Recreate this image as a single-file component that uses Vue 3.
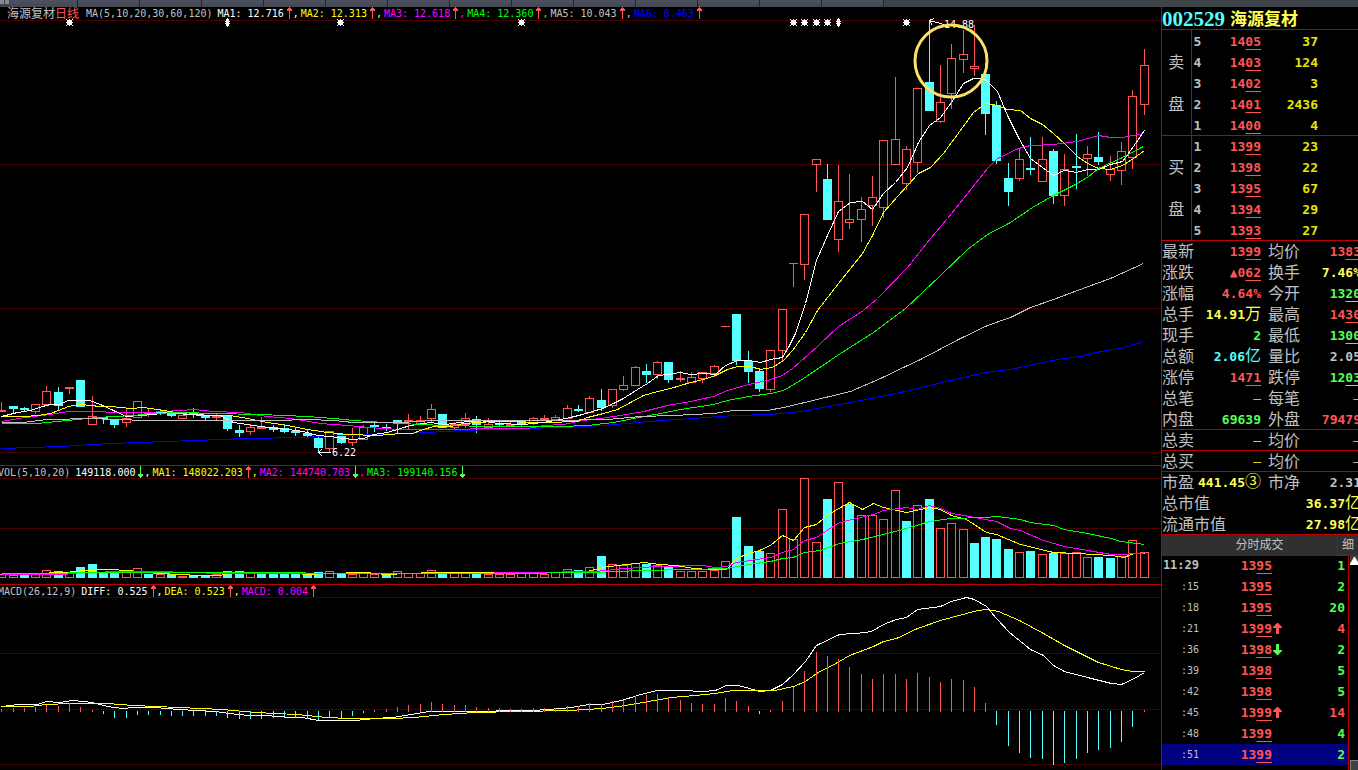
<script setup>
const tabs = Array.from({ length: 14 }, (_, i) => i)

const xAt = (i) => Math.floor(1.7 + 11.31 * i)

// [direction, high, body top, body bottom, low]
const candleRows = [
  [1,402,410,411,411],[0,406,406,409,413],[0,407,408,410,412],[1,404,404,411,414],[1,386,391,404,404],
  [0,387,392,406,410],[1,387,387,388,394],[0,380,380,407,407],[1,396,416,424,424],[0,417,417,419,424],
  [0,420,420,425,428],[1,409,418,422,427],[1,401,401,417,417],[1,408,413,414,417],[0,409,412,413,415],
  [0,411,412,416,417],[1,415,415,418,418],[0,408,412,415,418],[0,415,415,418,420],[1,414,416,417,420],
  [0,415,415,429,431],[0,425,430,433,437],[1,424,427,431,435],[1,417,427,428,429],[0,425,427,430,432],
  [0,424,428,432,433],[0,428,431,433,436],[0,430,433,436,438],[0,437,438,448,452],[1,431,431,448,452],
  [0,433,434,443,444],[1,428,439,442,446],[1,425,427,439,439],[0,421,425,427,432],[0,424,427,429,431],
  [0,420,420,422,433],[1,414,420,421,430],[1,416,420,423,423],[1,404,409,418,422],[0,414,414,428,428],
  [1,422,424,427,430],[1,413,418,424,428],[0,416,419,425,433],[1,418,424,427,429],[0,422,423,425,426],
  [1,422,424,425,426],[0,421,421,424,426],[1,417,418,423,425],[1,415,418,419,421],[1,415,417,419,419],
  [1,405,408,418,418],[0,405,409,411,412],[1,396,398,412,412],[0,389,400,408,411],[1,389,389,405,408],
  [1,376,385,389,391],[1,366,367,385,385],[0,364,371,375,383],[1,361,362,374,379],[0,362,362,380,383],
  [1,371,378,379,382],[1,372,377,382,382],[1,372,372,378,383],[1,365,366,373,377],[1,326,326,326,326],
  [0,314,314,361,365],[0,351,361,372,383],[0,368,371,389,392],[1,350,350,389,392],[1,309,309,350,362],
  [1,263,263,263,287],[1,214,214,264,280],[1,159,159,164,192],[0,164,179,220,220],[1,165,201,239,252],
  [1,174,219,222,229],[1,197,209,219,242],[1,176,197,205,226],[1,140,140,207,218],[1,77,139,164,164],
  [1,146,149,183,190],[1,88,88,162,173],[0,21,82,111,111],[1,65,102,121,123],[1,44,58,93,109],
  [1,30,54,59,73],[1,25,66,68,76],[0,63,74,114,135],[0,101,105,161,164],[0,163,178,192,206],
  [1,148,159,178,181],[0,137,168,170,175],[1,137,159,181,181],[0,149,151,196,204],[1,154,169,195,206],
  [0,134,166,168,189],[1,146,154,158,176],[0,132,157,162,165],[1,156,169,174,181],[1,142,151,170,185],
  [1,90,96,157,169],[1,49,65,104,115],
]
const candles = candleRows.map(([up, high, top, bottom, low], i) => ({
  up, high, top, bottom, low, x: xAt(i), thin: up && bottom - top < 2,
}))

// bar tops; negative marks a falling session
const volumeTops = [
  574,575,-574,574,570,-571,573,-567,-564,-572,-573,572,568,-574,574,-574,576,-575,-575,574,
  -571,-571,573,-573,-573,-573,-573,-574,-572,571,-573,574,573,574,-574,571,573,573,570,-573,
  573,573,-573,574,574,574,573,573,574,572,569,-570,567,-556,564,565,563,-564,565,-566,
  571,571,571,570,561,-517,-546,-551,553,509,539,478,542,-499,482,-504,515,515,519,490,
  -521,505,-499,528,523,529,-543,-537,-539,-549,552,-551,554,-553,553,552,557,-557,-558,556,540,552,
]
const volumes = volumeTops.map((v, i) => ({ up: v > 0, top: Math.abs(v), x: xAt(i) }))

const macdTips = [
  709,708,708,707,705,706,703,707,710,714,718,718,715,715,715,716,716,716,716,716,
  718,719,719,719,718,718,718,719,720,717,718,716,713,710,709,707,705,704,702,704,
  705,705,707,708,708,709,709,708,708,708,706,706,703,704,701,700,696,695,694,697,
  700,703,704,704,698,701,706,714,710,701,687,671,652,656,659,667,674,679,674,674,
  679,673,677,682,679,680,687,703,725,746,753,758,759,765,763,759,753,750,748,742,727,710,
]
const macdBars = macdTips.map((tip, i) => ({
  up: tip < 711, x: xAt(i), y: Math.min(tip, 711), h: tip < 711 ? 712 - tip : tip - 711,
}))

const priceLines = [
  { tone: 'blue', points: '1,448 60,446 110,443 167,441 247,438 300,437 340,435 400,433 447,431 460,430 527,428 587,426 627,423 660,420 693,418 733,415 770,414 800,411 850,402 900,392 950,380 985,372 1010,369 1057,359 1080,356 1100,351 1120,348 1143,341' },
  { tone: 'magenta', points: '1,421 25,417 50,414 68,411 97,411 113,412 147,412 180,410 193,409 213,411 240,412 267,416 290,418 320,423 347,425 367,427 400,429 447,429 493,428 527,428 543,425 563,424 582,420 600,418 620,415 643,411 667,405 690,401 713,396 727,390 748,384 767,380 782,375 792,368 800,361 817,346 838,326 863,310 877,298 907,267 930,238 947,218 967,193 987,168 997,158 1018,148 1030,145 1053,144 1077,141 1098,135 1110,137 1122,137 1143,133' },
  { tone: 'yellow', points: '1,416 25,416 37,415 50,413 58,410 68,406 80,404 100,406 110,406 130,408 143,407 163,410 182,413 200,415 230,415 247,418 267,422 287,425 307,429 327,432 347,434 377,435 400,433 412,433 423,429 433,426 450,426 463,423 493,421 547,422 577,421 587,417 603,413 617,409 630,402 643,395 657,391 670,388 690,382 703,379 715,375 727,369 737,366 750,366 760,369 772,367 783,360 792,350 800,339 805,332 817,310 838,283 862,253 872,235 883,212 897,196 918,173 930,167 943,153 973,112 985,103 997,105 1007,109 1020,110 1030,118 1042,124 1053,133 1065,144 1077,156 1087,163 1098,168 1110,169 1122,165 1133,158 1144,150' },
  { tone: 'white', points: '1,416 17,412 30,410 42,406 50,404 59,404 68,400 89,400 100,404 113,410 126,416 153,414 167,412 187,414 220,415 233,422 260,426 287,429 303,431 317,435 330,436 343,438 353,439 363,438 373,434 387,432 400,428 410,425 430,422 445,424 467,421 480,420 497,423 523,424 543,422 560,419 570,417 582,414 602,408 613,403 623,398 637,389 647,383 658,375 667,374 680,372 690,374 703,373 715,374 725,365 737,360 748,360 760,362 770,359 782,357 788,347 795,333 800,318 805,303 816,260 827,235 838,211 850,202 862,201 872,209 883,193 895,182 907,167 918,142 929,125 940,117 951,102 963,83 973,78 982,78 987,81 997,91 1007,115 1018,137 1030,158 1042,167 1053,175 1064,170 1076,172 1087,169 1098,169 1110,164 1122,161 1133,146 1144,130' },
  { tone: 'green', points: '1,423 37,423 67,420 97,417 133,415 150,413 183,412 213,413 260,414 307,416 333,418 353,420 400,423 443,425 493,426 560,426 587,425 613,422 633,418 660,413 680,409 713,404 727,400 748,396 770,393 783,390 800,380 840,353 873,332 905,308 940,275 967,249 987,234 1010,222 1032,207 1053,195 1075,184 1088,176 1098,168 1120,158 1143,146' },
  { tone: 'gray', points: '1,422 23,422 47,419 93,418 110,419 153,420 227,420 277,420 307,419 333,420 353,422 400,422 433,420 550,420 607,419 640,416 673,415 713,413 733,410 767,410 783,407 800,403 850,391 880,378 905,366 920,359 960,338 987,325 1010,317 1030,307 1053,299 1077,290 1110,278 1143,263' },
]
const volumeLines = [
  { tone: 'yellow', points: '1,574 65,572 85,570 107,569 129,570 144,572 178,574 200,575 218,575 237,572 296,573 307,574 326,573 366,572 385,574 433,572 481,572 533,573 560,572 587,571 602,567 617,565 644,562 659,564 675,565 694,568 709,569 726,569 736,558 748,553 759,550 770,545 782,535 793,540 804,527 816,524 828,514 849,502 862,509 873,503 883,507 906,512 929,507 940,509 951,515 966,519 986,532 996,534 1020,544 1053,552 1077,553 1111,555 1123,557 1134,553 1144,553' },
  { tone: 'magenta', points: '1,574 63,574 81,572 129,571 155,571 189,572 222,573 322,573 459,573 529,572 594,571 625,568 656,566 702,565 715,567 726,566 736,562 770,557 782,552 793,549 804,540 816,537 828,529 839,522 873,514 883,510 906,507 917,509 929,505 940,508 951,513 969,516 996,521 1010,528 1020,530 1043,540 1064,546 1087,550 1111,554 1144,553' },
  { tone: 'green', points: '1,573 60,573 76,572 300,572 310,573 520,573 574,572 594,572 640,570 690,569 726,568 748,564 770,561 782,558 793,557 804,552 820,550 839,543 862,539 883,534 906,528 929,521 950,518 985,517 996,516 1020,519 1030,522 1053,525 1064,529 1087,533 1111,538 1120,541 1144,544' },
]
const macdLines = [
  { tone: 'white', points: '1,706 18,704 37,704 46,701 59,702 72,700 92,702 107,706 122,708 133,707 155,707 178,709 215,711 229,713 248,715 266,715 289,717 302,717 318,720 355,720 374,718 392,717 411,714 429,711 459,711 533,710 560,708 571,707 589,704 602,704 621,700 637,695 656,690 682,690 702,691 715,690 726,685 738,685 749,688 759,691 770,690 782,684 793,674 805,661 816,645 839,634 866,632 873,630 883,624 896,619 906,617 917,609 940,606 951,601 966,597 974,599 986,606 996,618 1009,632 1030,649 1043,655 1053,665 1064,671 1087,677 1111,683 1121,684 1134,678 1144,672' },
  { tone: 'yellow', points: '1,706 30,706 46,704 70,703 107,703 133,705 178,707 222,709 255,712 296,714 326,717 348,718 392,718 414,717 444,714 474,712 518,711 568,710 602,708 625,705 648,701 671,697 694,695 715,693 732,690 774,690 793,686 805,681 816,673 839,661 849,655 873,646 883,641 896,638 917,628 940,620 951,617 966,613 977,610 986,609 998,611 1019,620 1043,633 1064,645 1098,662 1121,669 1132,671 1144,671' },
]

const priceLegend = [
  { text: 'MA1: 12.716', tone: 'white', dir: 'up' },
  { text: 'MA2: 12.313', tone: 'yellow', dir: 'up' },
  { text: 'MA3: 12.618', tone: 'magenta', dir: 'up' },
  { text: 'MA4: 12.360', tone: 'green', dir: 'up' },
  { text: 'MA5: 10.043', tone: 'gray', dir: 'up' },
  { text: 'MA6: 8.463', tone: 'blue', dir: 'up' },
]
const volumeLegend = [
  { text: '149118.000', tone: 'white', dir: 'down' },
  { text: 'MA1: 148022.203', tone: 'yellow', dir: 'up' },
  { text: 'MA2: 144740.703', tone: 'magenta', dir: 'down' },
  { text: 'MA3: 199140.156', tone: 'green', dir: 'down' },
]
const macdLegend = [
  { text: 'DIFF: 0.525', tone: 'white', dir: 'up' },
  { text: 'DEA: 0.523', tone: 'yellow', dir: 'up' },
  { text: 'MACD: 0.004', tone: 'magenta', dir: 'up' },
]

const stars = [69, 340, 521, 793, 804, 816, 827, 906]
const diamonds = [227, 838]

const book = [
  { name: '卖盘', rows: [['', 5, '14', '05', 37], ['卖', 4, '14', '03', 124], ['', 3, '14', '02', 3], ['盘', 2, '14', '01', 2436], ['', 1, '14', '00', 4]] },
  { name: '买盘', rows: [['', 1, '13', '99', 23], ['买', 2, '13', '98', 22], ['', 3, '13', '95', 67], ['盘', 4, '13', '94', 29], ['', 5, '13', '93', 27]] },
]

// [label, lead, underlined or unit part, tone, kind] for each half of the row
const stats = [
  { cells: [['最新', '13', '99', 'red', 'u'], ['均价', '13', '83', 'red', 'u']] },
  { cells: [['涨跌', '▲0', '62', 'red', 'u'], ['换手', '7.46%', '', 'lemon', '']] },
  { cells: [['涨幅', '4.64%', '', 'red', ''], ['今开', '13', '20', 'lime', 'u']] },
  { cells: [['总手', '14.91', '万', 'lemon', 'c'], ['最高', '14', '30', 'red', 'u']] },
  { cells: [['现手', '2', '', 'lime', ''], ['最低', '13', '00', 'lime', 'u']] },
  { cells: [['总额', '2.06', '亿', 'cyan', 'c'], ['量比', '2.05', '', 'gray', '']] },
  { cells: [['涨停', '14', '71', 'red', 'u'], ['跌停', '12', '03', 'lime', 'u']] },
  { cells: [['总笔', '', '–', 'gray', 'd'], ['每笔', '', '–', 'gray', 'd']] },
  { cells: [['内盘', '69639', '', 'lime', ''], ['外盘', '79479', '', 'red', '']] },
  { ruled: true, cells: [['总卖', '', '–', 'amber', 'd'], ['均价', '', '–', 'gray', 'd']] },
  { ruled: true, cells: [['总买', '', '–', 'amber', 'd'], ['均价', '', '–', 'gray', 'd']] },
  { ruled: true, cells: [['市盈', '441.45', '③', 'lemon', 'c'], ['市净', '2.31', '', 'gray', '']] },
  { cells: [['总市值', '36.37', '亿', 'lemon', 'c']] },
  { cells: [['流通市值', '27.98', '亿', 'lemon', 'c']] },
]
const partClass = { u: 'under', c: 'unit', d: 'dash' }

const ticks = [
  { time: '11:29', tail: '95', vol: 1, tone: 'lime' },
  { time: ':15', tail: '95', vol: 2, tone: 'lime' },
  { time: ':18', tail: '95', vol: 20, tone: 'lime' },
  { time: ':21', tail: '99', vol: 4, tone: 'red', dir: 'up' },
  { time: ':36', tail: '98', vol: 2, tone: 'lime', dir: 'down' },
  { time: ':39', tail: '98', vol: 5, tone: 'lime' },
  { time: ':42', tail: '98', vol: 5, tone: 'lime' },
  { time: ':45', tail: '99', vol: 14, tone: 'red', dir: 'up' },
  { time: ':48', tail: '99', vol: 4, tone: 'lime' },
  { time: ':51', tail: '99', vol: 2, tone: 'lime', active: true },
]
</script>

<template>
  <div class="app">
    <div class="topbar">
      <i class="knob"></i><i class="knob"></i>
      <span v-for="t in tabs" :key="t" class="tab" :class="{ first: t === 0 }"></span>
    </div>
    <div class="body">
      <main class="charts">
        <section class="panel">
          <div class="legend main-legend">
            <span class="title">海源复材</span><span class="title red">日线</span>
            <span class="params">MA(5,10,20,30,60,120)</span>
            <span v-for="(l, i) in priceLegend" :key="l.text" class="item" :class="l.tone">
              {{ l.text }}<svg class="arrow" viewBox="0 0 7 12" :class="l.dir"><path d="M3 0h1v1h1v1h1v2H4v8H3V4H1V2h1V1h1z" /></svg><span v-if="i < priceLegend.length - 1" class="comma">,</span>
            </span>
          </div>
          <svg class="plot" viewBox="0 20 1161 445" preserveAspectRatio="none" role="img" aria-label="日线">
            <path class="grid" d="M0 20.5H1161M0 164.5H1161M0 308.5H1161M0 452.5H1161" />
            <g v-for="c in candles" :key="c.x" :class="c.up ? 'rise' : 'fall'">
              <rect v-if="c.high < c.top" :x="c.x" :y="c.high" width="1" :height="c.top - c.high" />
              <rect v-if="c.low > c.bottom" :x="c.x" :y="c.bottom" width="1" :height="c.low - c.bottom" />
              <rect v-if="!c.up || c.thin" :x="c.x - 4" :y="c.top" width="9" :height="c.up ? c.bottom - c.top + 1 : c.bottom - c.top" />
              <rect v-else class="hollow" :x="c.x - 3.5" :y="c.top + 0.5" width="8" :height="c.bottom - c.top" />
            </g>
            <polyline v-for="l in priceLines" :key="l.tone" class="line" :class="l.tone" :points="l.points" transform="translate(0.5 0.5)" />
            <path v-for="x in stars" :key="x" class="mark" :transform="`translate(${x} 22)`" d="M-2-2h5v5h-5zM-3-3h1v1h-1zM3-3h1v1h-1zM-3 3h1v1h-1zM3 3h1v1h-1zM0-3h1v7h-1zM-3 0h7v1h-7z" />
            <path v-for="x in diamonds" :key="x" class="mark" :transform="`translate(${x} 22)`" d="M0-4h1v1h1v2h1v1h-1v1h1v1h-1v2h-1v1h-1v-1h-1v-2h-1v-1h1v-1h-1v-1h1v-2h1z" />
            <path class="pointer" d="M929.5 20.5L944 24.5M929.5 20.5L934 18.5M929.5 20.5L932 25M318.5 452.5H331M318.5 452.5L322 449M318.5 452.5L322 456" />
            <text class="note" x="944" y="28">14.88</text>
            <text class="note" x="332" y="456">6.22</text>
            <circle class="ring" cx="951" cy="61" r="36" />
          </svg>
        </section>

        <section class="panel ruled">
          <div class="legend">
            <span class="params clipped">VOL(5,10,20)</span>
            <span v-for="(l, i) in volumeLegend" :key="l.text" class="item" :class="l.tone">
              {{ l.text }}<svg class="arrow" viewBox="0 0 7 12" :class="l.dir"><path d="M3 0h1v1h1v1h1v2H4v8H3V4H1V2h1V1h1z" /></svg><span v-if="i < volumeLegend.length - 1" class="comma">,</span>
            </span>
          </div>
          <svg class="plot" viewBox="0 478 1161 106" preserveAspectRatio="none" role="img" aria-label="VOL">
            <path class="grid" d="M0 478.5H1161M0 528.5H1161M0 577.5H1161" />
            <g v-for="v in volumes" :key="v.x" :class="v.up ? 'rise' : 'fall'">
              <rect v-if="v.up" class="hollow" :x="v.x - 3.5" :y="v.top + 0.5" width="8" :height="577 - v.top" />
              <rect v-else :x="v.x - 4" :y="v.top" width="9" :height="578 - v.top" />
            </g>
            <polyline v-for="l in volumeLines" :key="l.tone" class="line" :class="l.tone" :points="l.points" transform="translate(0.5 0.5)" />
          </svg>
        </section>

        <section class="panel ruled">
          <div class="legend">
            <span class="params clipped">MACD(26,12,9)</span>
            <span v-for="(l, i) in macdLegend" :key="l.text" class="item" :class="l.tone">
              {{ l.text }}<svg class="arrow" viewBox="0 0 7 12" :class="l.dir"><path d="M3 0h1v1h1v1h1v2H4v8H3V4H1V2h1V1h1z" /></svg><span v-if="i < macdLegend.length - 1" class="comma">,</span>
            </span>
          </div>
          <svg class="plot" viewBox="0 597 1161 173" preserveAspectRatio="none" role="img" aria-label="MACD">
            <path class="grid" d="M0 597.5H1161M0 653.5H1161M0 709.5H1161M0 764.5H1161" />
            <polyline v-for="l in macdLines" :key="l.tone" class="line" :class="l.tone" :points="l.points" transform="translate(0.5 0.5)" />
            <rect v-for="b in macdBars" :key="b.x" :class="b.up ? 'rise' : 'fall'" :x="b.x" :y="b.y" width="1" :height="b.h" />
          </svg>
        </section>
      </main>

      <aside class="side">
        <h1 class="stock"><span class="code">002529</span><span class="name">海源复材</span></h1>
        <table v-for="(side, s) in book" :key="side.name" class="book" :class="{ topline: s > 0 }" :aria-label="side.name">
          <tbody>
            <tr v-for="r in side.rows" :key="r[1]">
              <th>{{ r[0] }}</th>
              <td class="level">{{ r[1] }}</td>
              <td class="price red">{{ r[2] }}<span class="under">{{ r[3] }}</span></td>
              <td class="amount amber">{{ r[4] }}</td>
              <td></td>
            </tr>
          </tbody>
        </table>

        <dl class="stats topline">
          <div v-for="(row, n) in stats" :key="n" class="stat" :class="{ topline: row.ruled }">
            <div v-for="c in row.cells" :key="c[0]" class="pair">
              <dt>{{ c[0] }}</dt>
              <dd :class="c[3]">{{ c[1] }}<span :class="partClass[c[4]]">{{ c[2] }}</span></dd>
            </div>
          </div>
        </dl>

        <div class="deals-head"><span>分时成交</span><button type="button">细</button></div>
        <div class="deals">
          <table class="ticks" aria-label="分时成交">
            <tbody>
              <tr v-for="t in ticks" :key="t.time" :class="{ active: t.active }">
                <td class="time" :class="{ strong: t.time.length > 3 }">{{ t.time }}</td>
                <td class="deal red">13<span class="under">{{ t.tail }}</span></td>
                <td class="way"><svg v-if="t.dir" viewBox="0 0 9 11" :class="t.dir"><path d="M4 0h1l4 4v1H6v6H3V5H0V4z" /></svg></td>
                <td class="qty" :class="t.tone">{{ t.vol }}</td>
              </tr>
            </tbody>
          </table>
          <div class="scroll">
            <button type="button" aria-label="向上"><svg viewBox="0 0 9 8"><path d="M4 0h1l4 7v1H0V7z" /></svg></button>
            <i class="thumb"></i>
          </div>
        </div>
      </aside>
    </div>
  </div>
</template>

<style>
body { background: #000; overflow: hidden; }
</style>

<style scoped>
.app { display: flex; flex-direction: column; height: 100vh; background: #000; color: #c0c0c0; font-family: "DejaVu Sans Mono", "Noto Sans CJK SC", monospace; }
.topbar { display: flex; flex: none; height: 7px; background: #3f444b; }
.tab { box-sizing: border-box; width: 62px; background: linear-gradient(#4d515f, #454956); border-right: 1px solid #22252b; }
.tab.first { width: 68px; }
.knob { width: 4px; height: 4px; margin-right: 1px; background: #858990; }
.body { display: flex; flex: 1; min-height: 0; }
.charts { flex: 1; min-width: 0; display: grid; grid-template-rows: 458fr 119fr 186fr; }
.panel { display: flex; flex-direction: column; min-height: 0; overflow: hidden; }
.panel.ruled { border-top: 1px solid #c00000; }
.legend { display: flex; flex: none; height: 12px; line-height: 14px; font-size: 10px; white-space: nowrap; position: relative; }
.main-legend { height: 13px; padding-left: 7px; }
.title { font-size: 12px; }
.title.red { margin-right: 7px; }
.params { margin-right: 5px; }
.params.clipped { margin-left: -2px; }
.item { display: flex; }
.arrow { width: 7px; height: 12px; margin-left: 2px; shape-rendering: crispEdges; }
.comma { width: 8px; }
.up path { fill: #ff5454; }
.down path { fill: #54ff54; }
.down { transform: rotate(180deg); }
.plot { display: block; width: 100%; flex: 1; min-height: 0; overflow: visible; shape-rendering: crispEdges; }
.grid { stroke: #480000; fill: none; }
.line { fill: none; stroke: currentColor; }
.rise { fill: #ff5454; }
.fall { fill: #54ffff; }
.hollow { fill: none; stroke: #ff5454; }
.mark { fill: #fff; }
.pointer { stroke: #fff; fill: none; }
.note { fill: #fff; font-size: 10px; }
.ring { fill: none; stroke: #ffe066; stroke-width: 3; shape-rendering: auto; }

.white { color: #fff; }
.yellow { color: #ff0; }
.magenta { color: #f0f; }
.green { color: #0f0; }
.gray { color: #c0c0c0; }
.blue { color: #00f; }
.red { color: #ff5454; }
.lime { color: #54ff54; }
.lemon { color: #ffff54; }
.cyan { color: #54ffff; }
.amber { color: #e6e600; }

.side { box-sizing: border-box; flex: none; width: 197px; border-left: 1px solid #c00000; overflow: hidden; display: flex; flex-direction: column; font-size: 13px; font-weight: 700; line-height: 21px; }
.topline { box-shadow: inset 0 1px #c00000; }
.stock { box-sizing: border-box; flex: none; display: flex; gap: 5px; height: 23px; margin: 0; line-height: 24px; border-bottom: 1px solid #c00000; font-weight: 700; }
.code { font-family: "Liberation Serif", serif; font-size: 21px; color: #54ffff; }
.name { font-family: "Noto Sans CJK SC", sans-serif; font-size: 17px; line-height: 22px; color: #ffff54; }
.book, .ticks { border-collapse: collapse; table-layout: fixed; width: 100%; }
.book th, .book td, .ticks td { box-sizing: border-box; height: 21px; padding: 0; line-height: 21px; }
.book th, .book td { padding-top: 2px; line-height: 19px; }
.book th { width: 29px; font-size: 16px; font-weight: 400; border-right: 1px solid #c00000; }
.book .level { width: 18px; padding-left: 2px; }
.book .price { width: 52px; text-align: right; }
.book .amount { width: 57px; text-align: right; }
.under { text-decoration: underline; text-decoration-thickness: 1px; text-underline-offset: 3px; }
.unit, .dash { font-weight: 400; }
.unit { font-size: 16px; line-height: 20px; }

.stats { margin: 0; line-height: 23px; }
.stat { display: flex; height: 21px; white-space: nowrap; }
.pair { display: flex; justify-content: space-between; flex: 1; margin-right: -3px; }
.pair:first-child:not(:last-child) { flex: none; width: 99px; margin-right: 7px; }
.pair dt { font-size: 16px; font-weight: 400; }
.pair dd { margin: 0; }

.deals-head { display: flex; height: 22px; margin-top: 0; margin-bottom: -1px; background: #303030; box-shadow: inset 0 1px #c00000; font-size: 12px; font-weight: 400; }
.deals-head span { flex: 1; text-align: center; padding-left: 20px; line-height: 23px; }
.deals-head button { width: 21px; padding: 0; border: 1px solid #c00000; border-width: 0 0 1px 1px; background: none; color: #c0c0c0; font: inherit; line-height: 22px; }
.deals { display: flex; flex: 1; min-height: 0; }
.ticks { flex: 1; align-self: flex-start; }
.ticks .time { width: 37px; text-align: right; font-size: 10px; font-weight: 400; }
.ticks .time.strong { font-size: 12px; font-weight: 700; }
.ticks .deal { width: 73px; text-align: right; }
.ticks .way { width: 12px; padding-left: 1px; line-height: 0; }
.ticks .way svg { width: 9px; height: 11px; }
.ticks .qty { text-align: right; padding-right: 3px; }
.active { background: #000080; }
.scroll { box-sizing: border-box; display: flex; flex-direction: column; justify-content: space-between; width: 10px; padding: 1px 0 0 1px; border-left: 1px solid #c00000; }
.scroll button { width: 9px; height: 9px; padding: 0; border: 0; background: #404040; line-height: 0; }
.scroll svg { width: 9px; height: 8px; }
.scroll path { fill: #fff; }
.thumb { height: 9px; background: #404040; border: 1px solid #808080; border-width: 1px 0 0 1px; }
</style>
